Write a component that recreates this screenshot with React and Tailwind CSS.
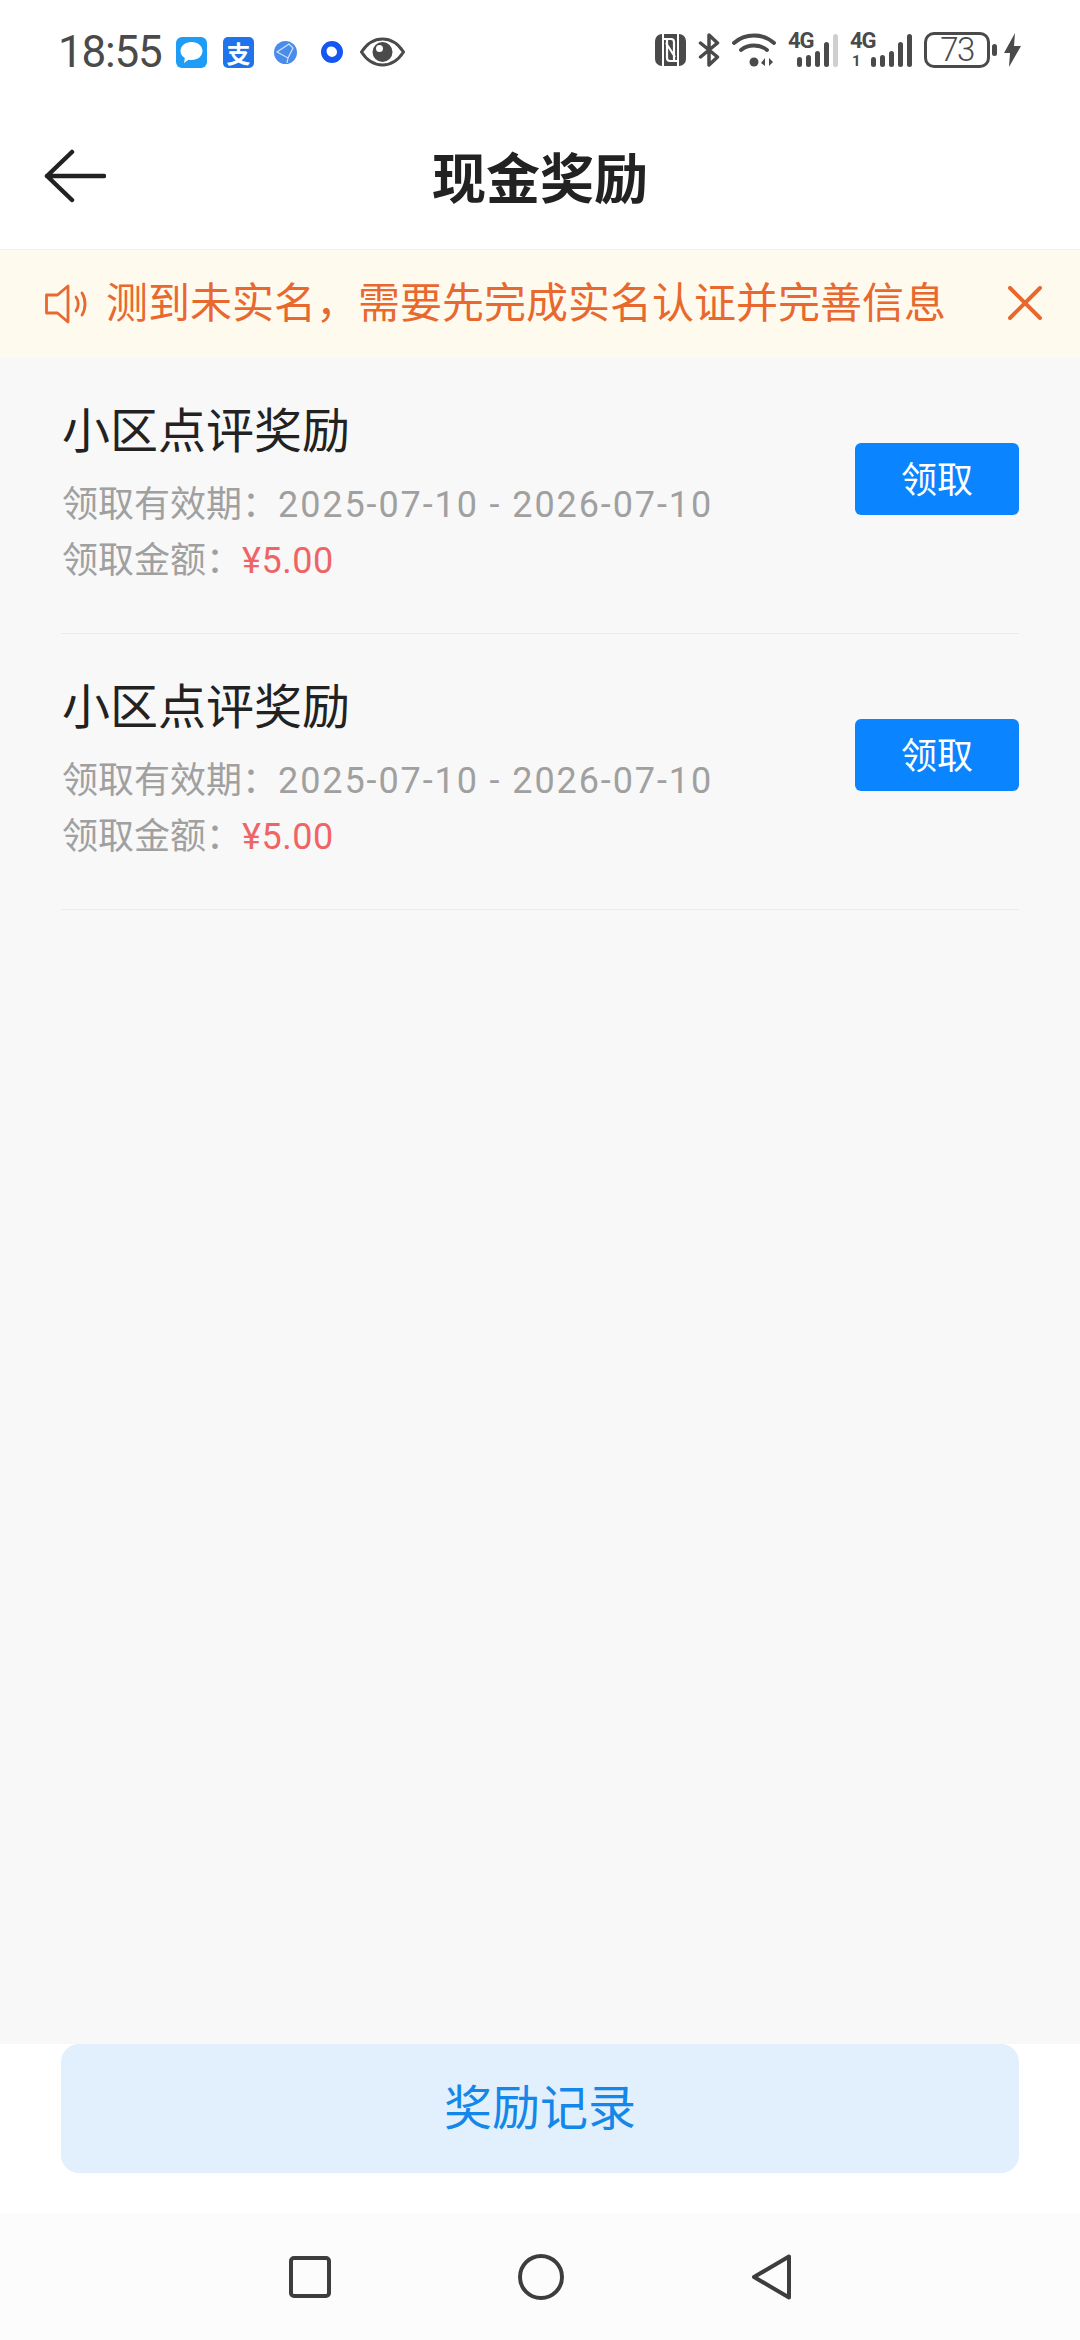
const CJK = { fontFamily: '"Noto Sans CJK SC", Roboto, sans-serif' };
const NUM = { fontFamily: "Roboto, sans-serif" };

function StatusLeft() {
  return (
    <div className="flex items-center">
      <span className="text-[44px] leading-[44px] text-[#4a4a4a] tracking-[-1.200px] w-[118px]" style={NUM}>18:55</span>
      <svg width="31" height="31" viewBox="0 0 31 31">
        <rect width="31" height="31" rx="6" fill="#1f9cf5" />
        <path d="M15.500 5c6.500 0 11 4 11 9s-4.500 9-11 9c-1 0-2-.1-3-.3L8 26l.8-5C6 19.300 4.500 16.800 4.500 14c0-5 4.500-9 11-9z" fill="#fff" />
      </svg>
      <div className="ml-[16px] w-[31px] h-[31px] rounded-[5px] bg-[#1f74ec] text-white text-[24px] leading-[31px] font-bold text-center">支</div>
      <svg className="ml-[20px]" width="23" height="23" viewBox="0 0 23 23">
        <circle cx="11.500" cy="11.500" r="11.500" fill="#4a8cea" />
        <path d="M15 3 3 11l11 6 5-10-4-4zM14 17l-1 5" fill="none" stroke="#cfe3fb" strokeWidth="1.200" />
      </svg>
      <svg className="ml-[24px]" width="22" height="22" viewBox="0 0 22 22">
        <circle cx="11" cy="11" r="8" fill="none" stroke="#1557f0" strokeWidth="6" />
        <circle cx="10" cy="10" r="4.500" fill="#fff" />
      </svg>
      <svg className="ml-[17px]" width="45" height="30" viewBox="0 0 45 30">
        <path d="M1.500 15C7 6.500 14 2 22.500 2s15.500 4.500 21 13c-5.500 8.500-13 13-21 13S7 23.500 1.500 15z" fill="none" stroke="#4a4a4a" strokeWidth="3" />
        <path fillRule="evenodd" d="M22.500 5a10 10 0 1 1 0 20 10 10 0 0 1 0-20zm-3 3a3.500 3.500 0 1 0 0 7 3.500 3.500 0 0 0 0-7z" fill="#4a4a4a" />
      </svg>
    </div>
  );
}

function Bars({ faded }) {
  const heights = [10, 12, 16, 25, 33];
  return (
    <div className="flex items-end gap-[3.500px]">
      {heights.map((h, i) => (
        <div
          key={i}
          className={faded && i === 4 ? "w-[5.500px] rounded-full bg-[#cfcfcf]" : "w-[5.500px] rounded-full bg-[#4a4a4a]"}
          style={{ height: h }}
        />
      ))}
    </div>
  );
}

function StatusRight() {
  return (
    <div className="flex items-center -mt-[4px]">
      <svg width="31" height="32" viewBox="0 0 31 32">
        <rect width="31" height="32" rx="7" fill="#4a4a4a" />
        <path d="M8 0v32M23 0v32" stroke="#fff" strokeWidth="2" />
        <path d="M9 5h7c2 0 3 1 3 3v19M22 27h-7c-2 0-3-1-3-3V5M11 9l9 14" fill="none" stroke="#fff" strokeWidth="2.200" />
      </svg>
      <svg className="ml-[12px]" width="22" height="34" viewBox="0 0 22 34">
        <path d="M2.500 10l17 14-8.500 8V2l8.500 8-17 14" fill="none" stroke="#4a4a4a" strokeWidth="3.500" strokeLinejoin="round" strokeLinecap="round" />
      </svg>
      <svg className="ml-[12px]" width="44" height="34" viewBox="0 0 44 34">
        <path d="M2 10c11-10 29-10 40 0M9 17c7-6 19-6 26 0" fill="none" stroke="#4a4a4a" strokeWidth="3.800" strokeLinecap="round" />
        <circle cx="22" cy="29" r="4.500" fill="#4a4a4a" />
        <path d="M33 25v8l-4-3zM37 25v8l4-4z" fill="#4a4a4a" />
      </svg>
      <div className="relative ml-[12px] w-[50px] h-[34px]">
        <span className="absolute left-0 top-[-3px] text-[22px] leading-[22px] font-bold tracking-[-1px] text-[#4a4a4a]" style={NUM}>4G</span>
        <div className="absolute right-0 bottom-0"><Bars faded /></div>
      </div>
      <div className="relative ml-[12px] w-[62px] h-[34px]">
        <span className="absolute left-0 top-[-3px] text-[22px] leading-[22px] font-bold tracking-[-1px] text-[#4a4a4a]" style={NUM}>4G</span>
        <span className="absolute left-[2px] bottom-[-1px] text-[15px] leading-[14px] font-bold text-[#4a4a4a]" style={NUM}>1</span>
        <div className="absolute right-0 bottom-0"><Bars /></div>
      </div>
      <div className="ml-[12px] w-[66px] h-[36px] rounded-[10px] border-[3px] border-[#4a4a4a] flex items-center justify-center">
        <span className="text-[33px] leading-[30px] font-light tracking-[-1.500px] text-[#4a4a4a]" style={NUM}>73</span>
      </div>
      <div className="ml-[2px] w-[5px] h-[12px] rounded-full bg-[#4a4a4a]" />
      <svg className="ml-[7px]" width="17" height="34" viewBox="0 0 17 34">
        <path d="M11 0 0 20h6l-1 14L17 13h-7z" fill="#4a4a4a" />
      </svg>
    </div>
  );
}

function RewardItem() {
  return (
    <div className="h-[276px] flex items-start justify-between border-b border-[#ececec]">
      <div className="pl-[1px]">
        <div className="text-[48px] leading-[60px] mt-[39px] text-[#222]">小区点评奖励</div>
        <div className="h-[56px] text-[36px] leading-[56px] mt-[16px] text-[#a0a0a0]">
          领取有效期：<span className="tracking-[1.900px]" style={NUM}>2025-07-10 - 2026-07-10</span>
        </div>
        <div className="h-[56px] text-[36px] leading-[56px] text-[#a0a0a0]">
          领取金额：<span className="text-[#ef6464] tracking-[0.500px]" style={NUM}>¥5.00</span>
        </div>
      </div>
      <button className="mt-[85px] w-[164px] h-[72px] pb-[4px] rounded-[6px] bg-[#0a84ff] text-white text-[36px] leading-[64px] text-center">领取</button>
    </div>
  );
}

export default function App() {
  return (
    <div className="w-[1080px] h-[2340px] flex flex-col bg-[#f8f8f8] overflow-hidden" style={CJK}>
      {/* status + title */}
      <div className="h-[250px] bg-white border-b border-[#f0f0f0]">
        <div className="h-[84px] pt-[20px] pl-[58px] pr-[59px] flex items-center justify-between">
          <StatusLeft />
          <StatusRight />
        </div>
        <div className="relative h-[165px] flex items-center justify-center pt-[19px]">
          <svg className="absolute left-[44px] top-[65px]" width="62" height="54" viewBox="0 0 62 54">
            <path d="M60 27H3M28 3 3 27l25 24" fill="none" stroke="#222" strokeWidth="4.500" strokeLinecap="round" strokeLinejoin="round" />
          </svg>
          <span className="text-[54px] leading-[64px] font-bold text-[#222]">现金奖励</span>
        </div>
      </div>

      {/* notice */}
      <div className="h-[108px] bg-[#fffaee] flex items-center pl-[45px] pr-[38px]">
        <svg width="45" height="40" viewBox="0 0 45 40" className="shrink-0">
          <path d="M1.500 11h11L23 2v36L12.500 29h-11z" fill="none" stroke="#e8692f" strokeWidth="2.800" strokeLinejoin="round" />
          <path d="M31 13c3 4 3 10 0 14M37 9c4 6 4 16 0 22" fill="none" stroke="#e8692f" strokeWidth="2.800" strokeLinecap="round" />
        </svg>
        <span className="ml-[16px] -mt-[8px] text-[42px] leading-[52px] text-[#e8692f]">测到未实名，需要先完成实名认证并完善信息</span>
        <svg className="ml-auto -mt-[2px]" width="34" height="34" viewBox="0 0 34 34">
          <path d="M2 2l30 30M32 2 2 32" stroke="#e8692f" strokeWidth="4" strokeLinecap="round" />
        </svg>
      </div>

      {/* list */}
      <div className="flex-1 px-[61px]">
        <RewardItem />
        <RewardItem />
      </div>

      {/* bottom action */}
      <div className="h-[169px] bg-white px-[61px]">
        <button className="w-full h-[129px] pb-[8px] rounded-[18px] bg-[#e1f0fc] text-[#1487e8] text-[48px] leading-[121px] text-center">奖励记录</button>
      </div>

      {/* nav bar */}
      <div className="h-[127px] bg-[#fcfcfc] flex items-center justify-center gap-[187px]">
        <svg width="42" height="42" viewBox="0 0 42 42">
          <rect x="2" y="2" width="38" height="38" rx="3" fill="none" stroke="#3d3d3d" strokeWidth="4" />
        </svg>
        <svg width="46" height="46" viewBox="0 0 46 46">
          <circle cx="23" cy="23" r="21" fill="none" stroke="#3d3d3d" strokeWidth="4" />
        </svg>
        <svg width="40" height="46" viewBox="0 0 40 46">
          <path d="M38 2.500v41L3 23z" fill="none" stroke="#3d3d3d" strokeWidth="4" strokeLinejoin="round" />
        </svg>
      </div>
    </div>
  );
}
